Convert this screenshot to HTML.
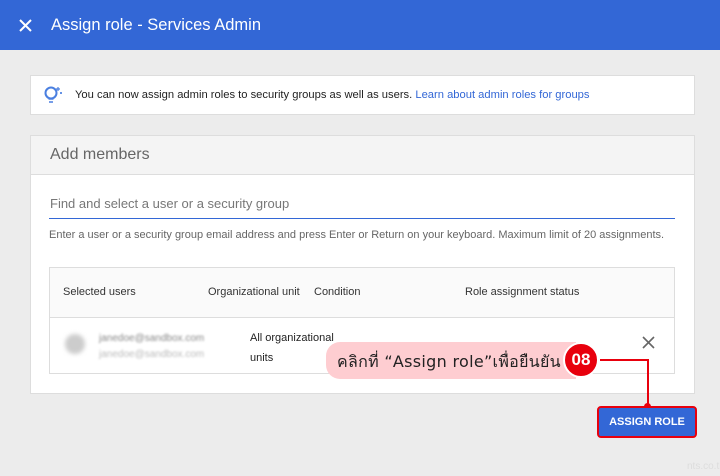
<!DOCTYPE html>
<html><head><meta charset="utf-8"><style>
*{margin:0;padding:0;box-sizing:border-box}
body{width:720px;height:476px;overflow:hidden;background:#ececec;font-family:"Liberation Sans",Arial,sans-serif;position:relative;color:#333}
.hdr{position:absolute;left:0;top:0;width:720px;height:50px;background:#3367d6;color:#fff}
.hdr .t{position:absolute;left:51px;top:16px;font-size:16.5px}
.abs{position:absolute}
</style></head><body>
<div class="hdr">
<svg class="abs" style="left:19px;top:19px" width="13" height="13" viewBox="0 0 13 13"><path d="M1 1L12 12M12 1L1 12" stroke="#fff" stroke-width="2"/></svg>
<div class="t">Assign role - Services Admin</div>
</div>
<div class="abs" style="left:30px;top:75px;width:665px;height:40px;background:#fff;border:1px solid #ddd"></div>
<svg class="abs" style="left:43px;top:85px" width="22" height="20" viewBox="0 0 22 20"><circle cx="8" cy="8" r="5.5" fill="none" stroke="#4a7fe0" stroke-width="2"/><path d="M5.5 14h5M6 17h4" stroke="#4a7fe0" stroke-width="1.6"/><path d="M15 2v4M13 4h4M18 7v2M17 8h2" stroke="#4a7fe0" stroke-width="1.2"/></svg>
<div class="abs" style="left:75px;top:89px;font-size:11.2px;color:#222">You can now assign admin roles to security groups as well as users. <span style="color:#3367d6">Learn about admin roles for groups</span></div>
<div class="abs" style="left:30px;top:135px;width:665px;height:259px;background:#fff;border:1px solid #ddd"></div>
<div class="abs" style="left:31px;top:136px;width:663px;height:39px;background:#f4f4f4;border-bottom:1px solid #ddd"></div>
<div class="abs" style="left:50px;top:146px;font-size:16px;color:#666">Add members</div>
<div class="abs" style="left:50px;top:196px;font-size:13px;color:#777">Find and select a user or a security group</div>
<div class="abs" style="left:49px;top:218px;width:626px;height:1px;background:#3367d6"></div>
<div class="abs" style="left:49px;top:229px;font-size:11px;color:#666">Enter a user or a security group email address and press Enter or Return on your keyboard. Maximum limit of 20 assignments.</div>
<div class="abs" style="left:49px;top:267px;width:626px;height:107px;border:1px solid #ddd;background:#fff"></div>
<div class="abs" style="left:50px;top:268px;width:624px;height:50px;background:#fafafa;border-bottom:1px solid #ddd"></div>
<div class="abs" style="left:63px;top:286px;font-size:11px;color:#333">Selected users</div>
<div class="abs" style="left:208px;top:286px;font-size:11px;color:#333">Organizational unit</div>
<div class="abs" style="left:314px;top:286px;font-size:11px;color:#333">Condition</div>
<div class="abs" style="left:465px;top:286px;font-size:11px;color:#333">Role assignment status</div>
<div class="abs" style="left:65px;top:334px;width:20px;height:20px;border-radius:50%;background:#ccc;filter:blur(2px)"></div>
<div class="abs" style="left:99px;top:331px;font-size:10px;color:#888;filter:blur(1px);line-height:16px">janedoe@sandbox.com<br><span style="color:#bbb">janedoe@sandbox.com</span></div>
<div class="abs" style="left:250px;top:328px;font-size:11px;color:#222;line-height:20px">All organizational<br>units</div>
<svg class="abs" style="left:642px;top:336px" width="13" height="13" viewBox="0 0 13 13"><path d="M1 1L12 12M12 1L1 12" stroke="#666" stroke-width="1.6"/></svg>
<div class="abs" style="left:326px;top:342px;width:250px;height:37px;background:#fecdd1;border-radius:14px 0 0 14px"></div>
<div class="abs" style="left:337px;top:350px;font-size:16px;color:#222;font-family:'DejaVu Sans',sans-serif;letter-spacing:0.3px">คลิกที่ “Assign role”เพื่อยืนยัน</div>
<div class="abs" style="left:563px;top:342px;width:36px;height:36px;border-radius:50%;background:#e8000d;border:2px solid #fff;color:#fff;font-weight:bold;font-size:17px;text-align:center;line-height:32px">08</div>
<div class="abs" style="left:600px;top:359px;width:49px;height:2px;background:#e8000d"></div>
<div class="abs" style="left:647px;top:359px;width:2px;height:48px;background:#e8000d"></div>
<div class="abs" style="left:644px;top:403px;width:7px;height:7px;border-radius:50%;background:#e8000d"></div>
<div class="abs" style="left:597px;top:406px;width:100px;height:32px;background:#3367d6;border:2px solid #e8000d;border-radius:4px;color:#fff;font-weight:bold;font-size:11px;text-align:center;line-height:28px">ASSIGN ROLE</div>
<div class="abs" style="left:687px;top:461px;font-size:10px;color:#ddd">nts.co.th</div>
</body></html>
